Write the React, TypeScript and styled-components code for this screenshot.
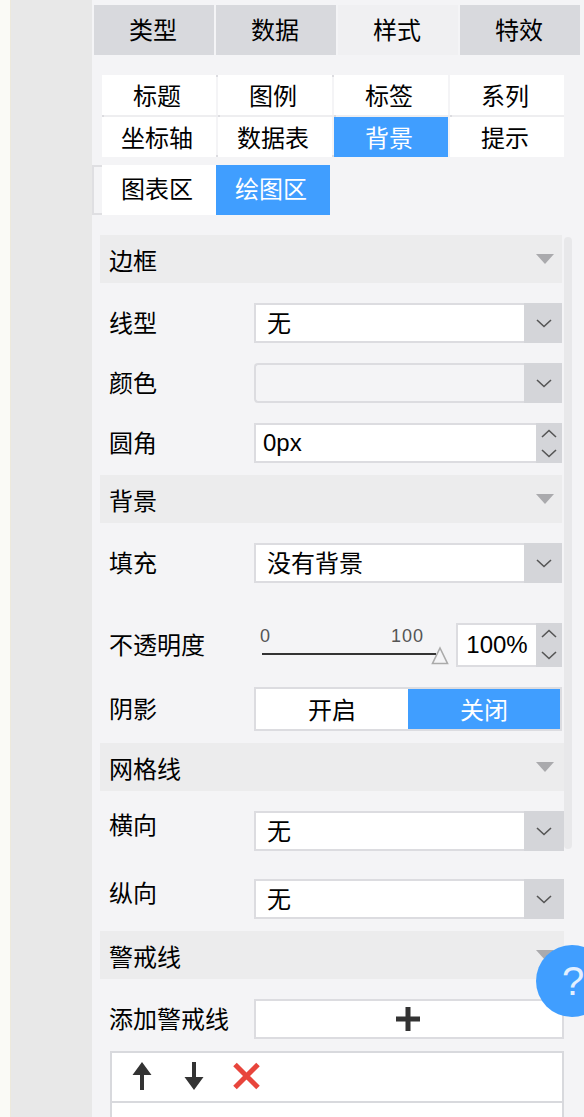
import styled, { createGlobalStyle } from "styled-components";

const Global = createGlobalStyle`
  html, body {
    margin: 0;
    height: 100%;
    overflow: hidden;
    background: #f4f4f6;
  }
  * {
    box-sizing: border-box;
  }
`;

const Page = styled.div`
  position: relative;
  display: flex;
  width: 584px;
  height: 1117px;
  overflow: hidden;
  font-family: "Liberation Sans", "Noto Sans CJK SC", sans-serif;
  font-size: 24px;
  line-height: 1;
  color: #000;
`;

const Rail = styled.div`
  flex: none;
  width: 92px;
  margin-left: 10px;
  border-left: 1px solid #ede9dc;
  background: #e8e8e8;
`;

const Edge = styled.div`
  flex: none;
  width: 10px;
  margin-right: -10px;
  background: #fafaf6;
`;

const Panel = styled.div`
  position: relative;
  flex: none;
  width: 492px;
  margin-left: -10px;
  padding-top: 5px;
  background: #f4f4f6;
`;

const MainTabs = styled.div`
  display: flex;
  gap: 2px;
  padding-left: 2px;
`;

const MainTab = styled.div<{ $active?: boolean }>`
  display: flex;
  align-items: center;
  justify-content: center;
  width: 120px;
  height: 50px;
  padding: 2px 2px 0 0;
  background: ${(p) => (p.$active ? "#f0f0f2" : "#d8d9dd")};
`;

// little grey dots where the cells meet, the rest of the gap is plain
const dot = (x: number, y: number) =>
  `linear-gradient(#dcdce0, #dcdce0) ${x}px ${y}px / 2px 2px no-repeat`;

const SubGrid = styled.div`
  display: grid;
  grid-template-columns: repeat(4, 114px);
  grid-auto-rows: 40px;
  gap: 2px;
  width: 462px;
  margin: 20px 0 0 10px;
  background: ${dot(114, 0)}, ${dot(230, 0)}, ${dot(114, 80)}, ${dot(230, 80)},
    ${dot(0, 40)}, ${dot(116, 40)}, ${dot(232, 40)}, ${dot(348, 40)},
    linear-gradient(#eeeef0, #eeeef0) 0 40px / 100% 2px no-repeat;
`;

const SubTab = styled.div<{ $active?: boolean }>`
  display: flex;
  align-items: center;
  justify-content: center;
  padding: 3px 4px 0 0;
  background: ${(p) => (p.$active ? "#409eff" : "#fff")};
  color: ${(p) => (p.$active ? "#fff" : "#000")};
`;

const AreaTabs = styled.div`
  display: flex;
  height: 50px;
  margin-top: 8px;
`;

const AreaTail = styled.div`
  width: 10px;
  border: 2px solid #dfdfe2;
  border-right: 0;
`;

const AreaTab = styled(SubTab)`
  width: 114px;
  padding-top: 0;
`;

const Section = styled.section<{ $wide?: boolean }>`
  width: ${(p) => (p.$wide ? "464px" : "462px")};
  margin-left: 8px;
`;

const FirstSection = styled(Section)`
  margin-top: 20px;
`;

const SectionHead = styled.div<{ $wide?: boolean }>`
  display: flex;
  align-items: center;
  justify-content: space-between;
  height: 48px;
  padding: 0 ${(p) => (p.$wide ? "10px" : "8px")} 0 9px;
  background: #ececed;
`;

const SectionTitle = styled.div`
  padding-top: 6px;
`;

const Rows = styled.div<{ $gap?: number; $last?: boolean }>`
  display: flex;
  flex-direction: column;
  gap: ${(p) => p.$gap ?? 20}px;
  padding: 20px 0 ${(p) => (p.$last ? 0 : 12)}px;
`;

const Row = styled.div<{ $spaced?: boolean }>`
  display: flex;
  align-items: center;
  margin-top: ${(p) => (p.$spaced ? "20px" : "0")};
`;

const Label = styled.div<{ $raised?: boolean }>`
  flex: none;
  width: 154px;
  padding-left: 9px;
  margin-top: ${(p) => (p.$raised ? "-10px" : "2px")};
`;

const Select = styled.div<{ $disabled?: boolean }>`
  display: flex;
  flex: 1;
  height: 40px;
  border: 2px solid #dcdce0;
  border-right: 0;
  border-radius: ${(p) => (p.$disabled ? "4px 0 0 4px" : "0")};
  background: ${(p) => (p.$disabled ? "#f4f4f6" : "#fff")};
`;

const SelectValue = styled.div`
  display: flex;
  flex: 1;
  align-items: center;
  padding: 2px 0 0 11px;
`;

const SelectArrow = styled.div`
  display: flex;
  flex: none;
  align-items: center;
  justify-content: center;
  width: 38px;
  margin: -2px 0;
  padding-left: 2px;
  background: #d4d5d9;
`;

const WideArrow = styled(SelectArrow)`
  width: 40px;
  padding-left: 0;
`;

const NumberInput = styled.div`
  display: flex;
  flex: 1;
  height: 40px;
  border: 2px solid #dcdce0;
  border-right: 0;
  background: #fff;
`;

const NumberValue = styled.div`
  display: flex;
  flex: 1;
  align-items: center;
  padding-left: 7px;
`;

const Stepper = styled.div`
  display: flex;
  flex: none;
  flex-direction: column;
  align-items: center;
  justify-content: space-between;
  width: 26px;
  margin: -2px 0;
  padding: 6px 0 5px;
  background: #d4d5d9;
`;

const TallStepper = styled(Stepper)`
  padding: 6px 0 7px;
`;

const Slider = styled.div`
  position: relative;
  flex: none;
  width: 202px;
  height: 44px;
  padding: 4px 0 0 6px;
`;

const SliderTicks = styled.div`
  display: flex;
  justify-content: space-between;
  width: 164px;
  font-size: 18px;
  letter-spacing: 1px;
  color: #555;
`;

const SliderTrack = styled.div`
  width: 174px;
  height: 2px;
  margin: 8px 0 0 2px;
  background: #333;
`;

const SliderHandle = styled.svg`
  position: absolute;
  left: 177px;
  top: 23px;
`;

const OpacityInput = styled(NumberInput)`
  height: 44px;
`;

const OpacityValue = styled(NumberValue)`
  justify-content: center;
  padding-left: 0;
`;

const Switch = styled.div`
  display: flex;
  flex: 1;
  height: 44px;
  border: 2px solid #dcdce0;
  background: #fff;
`;

const SwitchOption = styled(SubTab)`
  flex: 1;
  padding: 4px 0 0;
`;

const AddButton = styled.div`
  display: flex;
  flex: 1;
  align-items: center;
  justify-content: center;
  height: 40px;
  padding-right: 2px;
  border: 2px solid #dcdce0;
  background: #fff;
`;

const LineList = styled.div`
  width: 454px;
  height: 80px;
  margin: 12px 0 0 18px;
  border: 2px solid #d8d9dd;
  background: #fff;
`;

const LineTools = styled.div`
  display: flex;
  align-items: center;
  height: 50px;
  padding: 0 0 2px 20px;
  border-bottom: 2px solid #d8d9dd;
`;

const ToolIcon = styled.svg`
  flex: none;
`;

const ArrowTool = styled(ToolIcon)`
  margin-right: 32px;
`;

const CloseTool = styled(ToolIcon)`
  margin-left: -3px;
`;

const Scrollbar = styled.div`
  position: absolute;
  left: 472px;
  top: 237px;
  width: 8px;
  height: 612px;
  border-radius: 4px;
  background: #e8e8ea;
`;

const HelpButton = styled.div`
  position: absolute;
  left: 536px;
  top: 945px;
  display: flex;
  align-items: center;
  width: 72px;
  height: 72px;
  padding-left: 26px;
  border-radius: 50%;
  background: #409eff;
  font-size: 40px;
  color: #e3f0ff;
`;

function Caret() {
  return (
    <svg width="18" height="10" viewBox="0 0 18 10">
      <path d="M0 0h18l-9 10z" fill="#aaaaad" />
    </svg>
  );
}

function ChevronDown() {
  return (
    <svg width="16" height="9" viewBox="0 0 16 9">
      <path d="M1 1l7 6.5L15 1" fill="none" stroke="#555" strokeWidth="1.6" />
    </svg>
  );
}

function ChevronUp() {
  return (
    <svg width="16" height="9" viewBox="0 0 16 9">
      <path d="M1 8l7-6.5L15 8" fill="none" stroke="#555" strokeWidth="1.6" />
    </svg>
  );
}

function Head({ title, wide }: { title: string; wide?: boolean }) {
  return (
    <SectionHead $wide={wide}>
      <SectionTitle>{title}</SectionTitle>
      <Caret />
    </SectionHead>
  );
}

function SelectBox({ value, disabled, wide }: { value?: string; disabled?: boolean; wide?: boolean }) {
  const Arrow = wide ? WideArrow : SelectArrow;
  return (
    <Select $disabled={disabled}>
      <SelectValue>{value}</SelectValue>
      <Arrow>
        <ChevronDown />
      </Arrow>
    </Select>
  );
}

const subTabs = ["标题", "图例", "标签", "系列", "坐标轴", "数据表", "背景", "提示"];

export default function App() {
  return (
    <Page>
      <Global />
      <Edge />
      <Rail />
      <Panel>
        <MainTabs>
          <MainTab>类型</MainTab>
          <MainTab>数据</MainTab>
          <MainTab $active>样式</MainTab>
          <MainTab>特效</MainTab>
        </MainTabs>

        <SubGrid>
          {subTabs.map((t) => (
            <SubTab key={t} $active={t === "背景"}>
              {t}
            </SubTab>
          ))}
        </SubGrid>

        <AreaTabs>
          <AreaTail />
          <AreaTab>图表区</AreaTab>
          <AreaTab $active>绘图区</AreaTab>
        </AreaTabs>

        <FirstSection>
          <Head title="边框" />
          <Rows>
            <Row>
              <Label>线型</Label>
              <SelectBox value="无" />
            </Row>
            <Row>
              <Label>颜色</Label>
              <SelectBox disabled />
            </Row>
            <Row>
              <Label>圆角</Label>
              <NumberInput>
                <NumberValue>0px</NumberValue>
                <Stepper>
                  <ChevronUp />
                  <ChevronDown />
                </Stepper>
              </NumberInput>
            </Row>
          </Rows>
        </FirstSection>

        <Section>
          <Head title="背景" />
          <Rows>
            <Row>
              <Label>填充</Label>
              <SelectBox value="没有背景" />
            </Row>
            <Row $spaced>
              <Label>不透明度</Label>
              <Slider>
                <SliderTicks>
                  <span>0</span>
                  <span>100</span>
                </SliderTicks>
                <SliderTrack />
                <SliderHandle width="18" height="19" viewBox="0 0 18 19">
                  <path d="M9 2L16.500 17.500H1.500z" fill="#f4f4f6" stroke="#aaa" strokeWidth="1.6" />
                </SliderHandle>
              </Slider>
              <OpacityInput>
                <OpacityValue>100%</OpacityValue>
                <TallStepper>
                  <ChevronUp />
                  <ChevronDown />
                </TallStepper>
              </OpacityInput>
            </Row>
            <Row>
              <Label>阴影</Label>
              <Switch>
                <SwitchOption>开启</SwitchOption>
                <SwitchOption $active>关闭</SwitchOption>
              </Switch>
            </Row>
          </Rows>
        </Section>

        <Section $wide>
          <Head title="网格线" wide />
          <Rows $gap={28}>
            <Row>
              <Label $raised>横向</Label>
              <SelectBox value="无" wide />
            </Row>
            <Row>
              <Label $raised>纵向</Label>
              <SelectBox value="无" wide />
            </Row>
          </Rows>
        </Section>

        <Section $wide>
          <Head title="警戒线" wide />
          <Rows $last>
            <Row>
              <Label>添加警戒线</Label>
              <AddButton>
                <svg width="24" height="24" viewBox="0 0 24 24">
                  <path d="M12 0v24M0 12h24" stroke="#333" strokeWidth="5" />
                </svg>
              </AddButton>
            </Row>
          </Rows>
        </Section>

        <LineList>
          <LineTools>
            <ArrowTool width="20" height="28" viewBox="0 0 20 28">
              <path d="M10 0l9.500 13H12v15H8V13H.5z" fill="#333" />
            </ArrowTool>
            <ArrowTool width="20" height="28" viewBox="0 0 20 28">
              <path d="M10 28L.5 15H8V0h4v15h7.500z" fill="#333" />
            </ArrowTool>
            <CloseTool width="27" height="28" viewBox="0 0 27 28">
              <path d="M2 2.500l23 23M25 2.500l-23 23" stroke="#e8453c" strokeWidth="5" />
            </CloseTool>
          </LineTools>
        </LineList>

        <Scrollbar />
      </Panel>
      <HelpButton>?</HelpButton>
    </Page>
  );
}
